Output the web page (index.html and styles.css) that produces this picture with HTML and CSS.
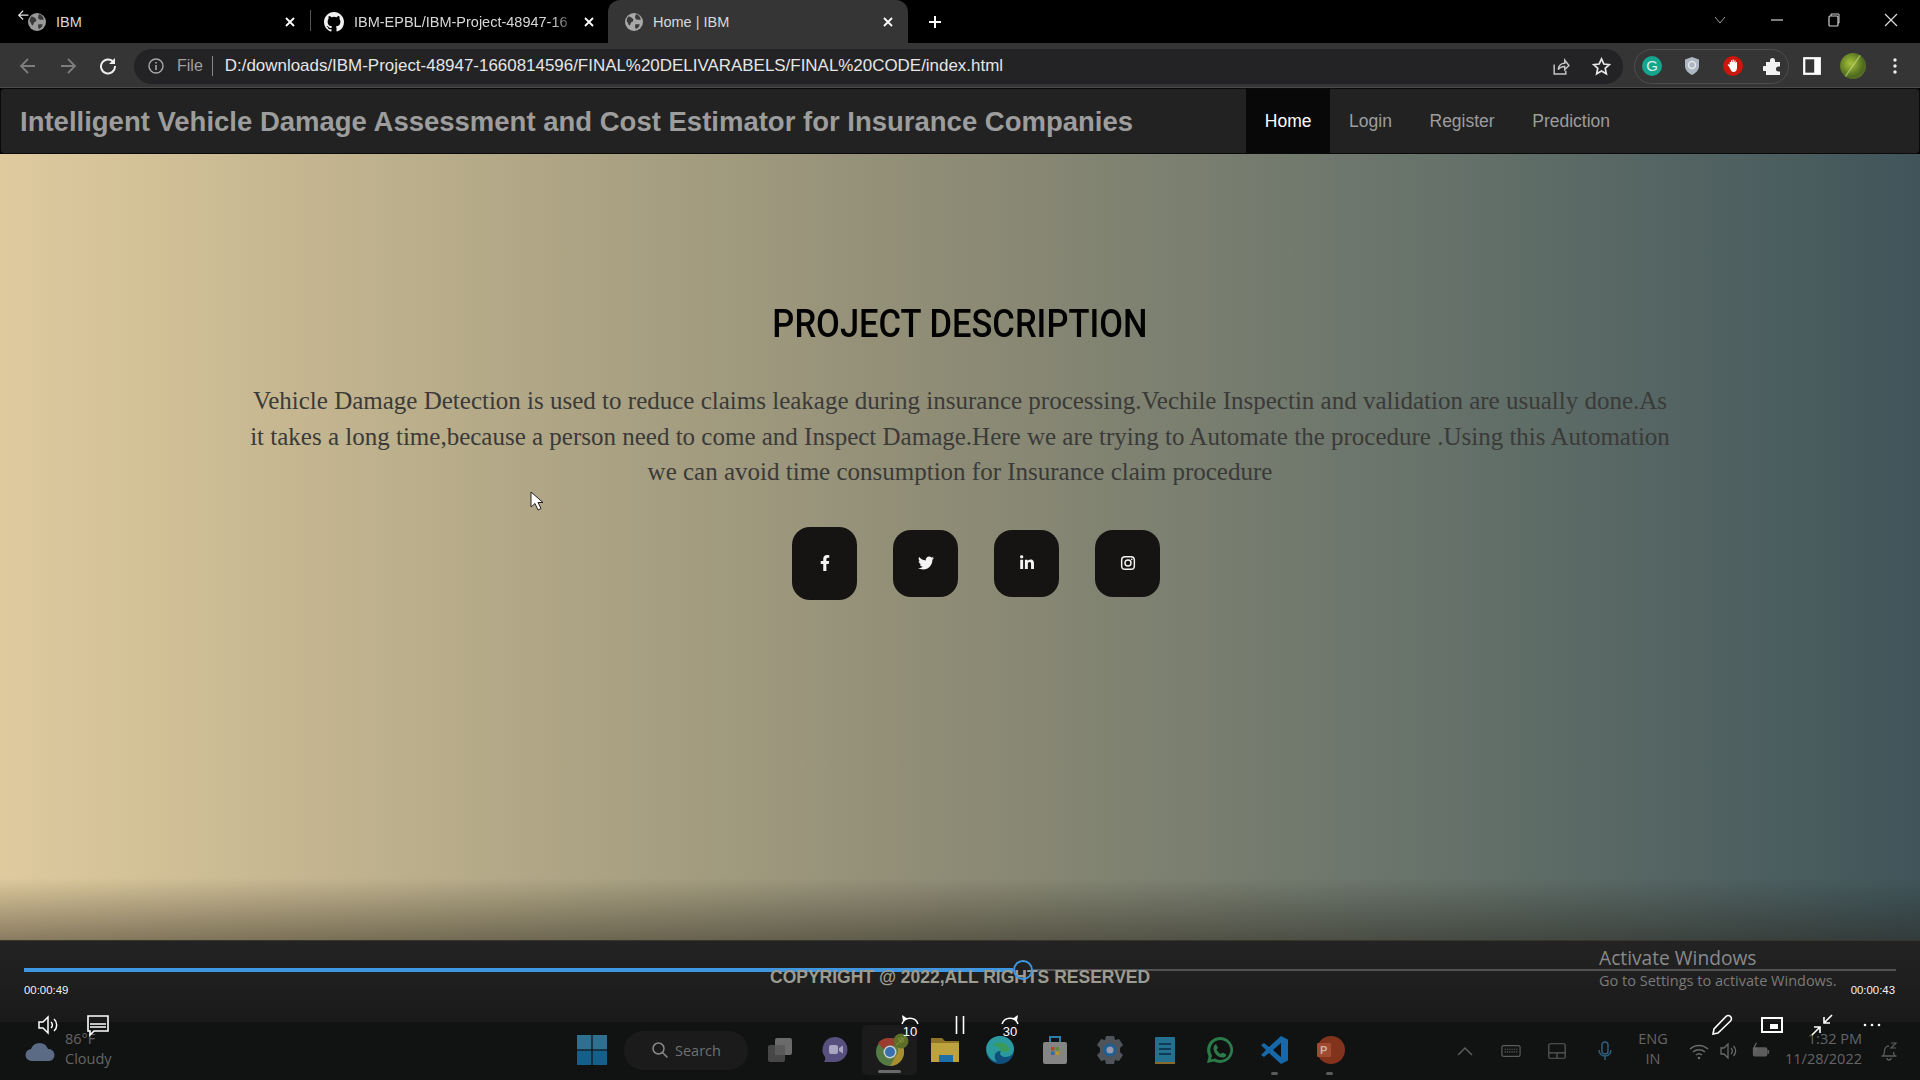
FILE: index.html
```html
<!DOCTYPE html>
<html lang="en">
<head>
<meta charset="utf-8">
<title>Home | IBM</title>
<link rel="stylesheet" href="styles.css">
</head>
<body>
<div class="screen">
  <div class="tabbar">
    <div class="tab tab-one">
      <svg class="back-mini" viewBox="0 0 16 16"><path d="M7 2 2 7l5 5M2 7h11" fill="none" stroke="#e8e8e8" stroke-width="1.3"/></svg>
      <svg class="fav" viewBox="0 0 16 16"><circle cx="8" cy="8" r="8" fill="#9a9a9a"/><path d="M3 3c2 0 3 1 4 2s0 3-1 3-1 3-2 3-1-2-2-3 0-4 1-5zM10 1c2 0 4 3 4 5h-3c-1 0-2-1-2-2s0-2 1-3zM10 10h3c0 2-2 4-3 4s-1-2-1-3 0-1 1-1z" fill="#3a3a3a"/></svg>
      <span class="tab-title">IBM</span>
      <svg class="tab-close" viewBox="0 0 12 12"><path d="M2 2l8 8M10 2l-8 8" stroke="#fff" stroke-width="1.8"/></svg>
    </div>
    <div class="tab tab-two">
      <svg class="fav fav-gh" viewBox="0 0 16 16"><path fill="#f2f2f2" d="M8 0C3.58 0 0 3.58 0 8c0 3.54 2.29 6.53 5.47 7.59.4.07.55-.17.55-.38 0-.19-.01-.82-.01-1.49-2.01.37-2.53-.49-2.69-.94-.09-.23-.48-.94-.82-1.13-.28-.15-.68-.52-.01-.53.63-.01 1.08.58 1.23.82.72 1.21 1.87.87 2.33.66.07-.52.28-.87.51-1.07-1.78-.2-3.64-.89-3.64-3.95 0-.87.31-1.59.82-2.15-.08-.2-.36-1.02.08-2.12 0 0 .67-.21 2.2.82a7.42 7.42 0 0 1 4 0c1.53-1.04 2.2-.82 2.2-.82.44 1.1.16 1.92.08 2.12.51.56.82 1.27.82 2.15 0 3.07-1.87 3.75-3.65 3.95.29.25.54.73.54 1.48 0 1.07-.01 1.93-.01 2.2 0 .21.15.46.55.38A8.01 8.01 0 0 0 16 8c0-4.42-3.58-8-8-8z"/></svg>
      <span class="tab-title tab-fade">IBM-EPBL/IBM-Project-48947-16</span>
      <svg class="tab-close" viewBox="0 0 12 12"><path d="M2 2l8 8M10 2l-8 8" stroke="#fff" stroke-width="1.8"/></svg>
    </div>
    <div class="tab tab-active">
      <svg class="fav" viewBox="0 0 16 16"><circle cx="8" cy="8" r="8" fill="#a8a8a8"/><path d="M3 3c2 0 3 1 4 2s0 3-1 3-1 3-2 3-1-2-2-3 0-4 1-5zM10 1c2 0 4 3 4 5h-3c-1 0-2-1-2-2s0-2 1-3zM10 10h3c0 2-2 4-3 4s-1-2-1-3 0-1 1-1z" fill="#3a3a3a"/></svg>
      <span class="tab-title">Home | IBM</span>
      <svg class="tab-close" viewBox="0 0 12 12"><path d="M2 2l8 8M10 2l-8 8" stroke="#fff" stroke-width="1.8"/></svg>
    </div>
    <svg class="new-tab" viewBox="0 0 14 14"><path d="M7 1v12M1 7h12" stroke="#fff" stroke-width="2"/></svg>
    <div class="window-controls">
      <svg viewBox="0 0 14 14"><path d="M2 4l5 6 5-6" fill="none" stroke="#9a9a9a" stroke-width="1"/></svg>
      <svg viewBox="0 0 14 14"><path d="M1 7h12" stroke="#cfcfcf" stroke-width="1.2"/></svg>
      <svg viewBox="0 0 14 14"><rect x="2" y="3" width="9" height="10" rx="1" fill="none" stroke="#cfcfcf" stroke-width="1.2"/><path d="M4 3V1h8v9h-1" fill="none" stroke="#cfcfcf" stroke-width="1"/></svg>
      <svg viewBox="0 0 14 14"><path d="M1 1l12 12M13 1L1 13" stroke="#dcdcdc" stroke-width="1.2"/></svg>
    </div>
  </div>

  <div class="toolbar">
    <svg class="tool-icon" viewBox="0 0 18 18"><path d="M9 2 2 9l7 7M2 9h14" fill="none" stroke="#7d7d7d" stroke-width="1.8"/></svg>
    <svg class="tool-icon" viewBox="0 0 18 18"><path d="M9 2l7 7-7 7M16 9H2" fill="none" stroke="#7d7d7d" stroke-width="1.8"/></svg>
    <svg class="tool-icon" viewBox="0 0 18 18"><path d="M14.6 5.2A7 7 0 1 0 16 9" fill="none" stroke="#eee" stroke-width="2"/><path d="M16 1v6h-6z" fill="#eee"/></svg>
    <div class="omnibox">
      <svg class="info" viewBox="0 0 16 16"><circle cx="8" cy="8" r="7" fill="none" stroke="#a8a8a8" stroke-width="1.4"/><path d="M8 7v5M8 4v1.6" stroke="#a8a8a8" stroke-width="1.6"/></svg>
      <span class="scheme">File</span>
      <span class="url">D:/downloads/IBM-Project-48947-1660814596/FINAL%20DELIVARABELS/FINAL%20CODE/index.html</span>
      <svg class="omni-icon share" viewBox="0 0 18 18"><path d="M3 7v9h11v-3" fill="none" stroke="#c4c4c4" stroke-width="1.4"/><path d="M7 12c0-4 3-6 6-6V3l4 5-4 4V9c-3 0-5 1-6 3z" fill="none" stroke="#c4c4c4" stroke-width="1.4"/></svg>
      <svg class="omni-icon" viewBox="0 0 18 18"><path d="M9 1.8l2.2 4.8 5.2.6-3.9 3.5 1.1 5.2L9 13.2l-4.6 2.7 1.1-5.2L1.6 7.2l5.2-.6z" fill="none" stroke="#e6e6e6" stroke-width="1.6"/></svg>
    </div>
    <div class="extensions">
      <span class="ext-g">G</span>
      <svg class="ext" viewBox="0 0 18 20"><path d="M9 1l7 2.500V10c0 4-3 7-7 9-4-2-7-5-7-9V3.500z" fill="#aeb6c2"/><circle cx="9" cy="9" r="3.500" fill="none" stroke="#e5e8ec" stroke-width="1.500"/></svg>
      <svg class="ext" viewBox="0 0 20 20"><circle cx="10" cy="10" r="10" fill="#c8170d"/><path d="M6 10.500l-1.500-1.500 1-1 1.200 1V6h1.300V4.300h1V6h.6V3.500h1.200V6h.6V4.500h1.200V7h.4V6h1v5.500c0 3-1.500 4.500-3.500 4.500-2.500 0-3-3-4.500-5.500z" fill="#fff"/></svg>
      <svg class="ext" viewBox="0 0 20 20"><path d="M3 6h4V4.500a2.500 2.500 0 0 1 5 0V6h5v4.500h-1.500a2.500 2.500 0 0 0 0 5H17V19H3v-4H1.500a2.500 2.500 0 0 1 0-5H3z" fill="#f2f2f2"/></svg>
    </div>
    <svg class="tool-icon panel" viewBox="0 0 18 18"><rect x="2" y="2" width="14" height="14" fill="none" stroke="#fff" stroke-width="2"/><rect x="11" y="2" width="5" height="14" fill="#fff"/></svg>
    <span class="avatar"></span>
    <svg class="tool-icon kebab" viewBox="0 0 18 18"><circle cx="9" cy="3" r="1.700" fill="#eee"/><circle cx="9" cy="9" r="1.700" fill="#eee"/><circle cx="9" cy="15" r="1.700" fill="#eee"/></svg>
  </div>

  <nav class="navbar">
    <a class="brand">Intelligent Vehicle Damage Assessment and Cost Estimator for Insurance Companies</a>
    <ul class="nav-links">
      <li class="nav-item current">Home</li>
      <li class="nav-item">Login</li>
      <li class="nav-item">Register</li>
      <li class="nav-item">Prediction</li>
    </ul>
  </nav>

  <main class="hero">
    <h1 class="hero-title">PROJECT DESCRIPTION</h1>
    <p class="hero-text">Vehicle Damage Detection is used to reduce claims leakage during insurance processing.Vechile Inspectin and validation are usually done.As it takes a long time,because a person need to come and Inspect Damage.Here we are trying to Automate the procedure .Using this Automation we can avoid time consumption for Insurance claim procedure</p>
    <div class="socials">
      <a class="social social-big"><svg viewBox="0 0 320 512"><path fill="#f4f4f4" d="M279 288l14-93h-89v-60c0-25 12-50 52-50h41V6s-37-6-72-6c-73 0-121 44-121 125v70H23v93h81v224h100V288z"/></svg></a>
      <a class="social"><svg viewBox="0 0 512 512"><path fill="#f4f4f4" d="M459 152c.3 4.500.3 9.100.3 13.600 0 138.700-105.600 298.600-298.600 298.600-59.500 0-114.700-17.200-161.100-47.100 8.400 1 16.600 1.300 25.300 1.300 49.100 0 94.200-16.600 130.300-44.800-46.100-1-84.800-31.200-98.100-72.800 6.500 1 13 1.600 19.800 1.600 9.400 0 18.800-1.300 27.600-3.600-48.100-9.700-84.100-52-84.100-103v-1.300c14 7.800 30.200 12.700 47.400 13.300-28.300-18.800-46.800-51-46.800-87.400 0-19.500 5.200-37.400 14.300-53 51.700 63.700 129.300 105.300 216.400 109.800-1.600-7.800-2.600-15.900-2.600-24 0-57.800 46.800-104.900 104.900-104.900 30.200 0 57.500 12.700 76.700 33.100 23.700-4.500 46.500-13.300 66.600-25.300-7.800 24-24.300 44.500-46.100 57.300 21.100-2.300 41.600-8.100 60.400-16.200-14.300 20.800-32.200 39.300-52.600 54.200z"/></svg></a>
      <a class="social"><svg viewBox="0 0 448 512"><path fill="#f4f4f4" d="M100 448H7V149h93zM53 108C23 108 0 83 0 54a54 54 0 0 1 107 0c0 29-24 54-54 54zm394 340h-93V302c0-35-1-79-48-79-48 0-56 38-56 77v148h-93V149h89v41h1c12-24 43-48 88-48 94 0 112 62 112 142v164z"/></svg></a>
      <a class="social"><svg viewBox="0 0 24 24"><rect x="2.500" y="2.500" width="19" height="19" rx="5" fill="none" stroke="#f4f4f4" stroke-width="2.200"/><circle cx="12" cy="12" r="4.500" fill="none" stroke="#f4f4f4" stroke-width="2.200"/><circle cx="17.500" cy="6.500" r="1.300" fill="#f4f4f4"/></svg></a>
    </div>
    <svg class="cursor" viewBox="0 0 14 21"><path d="M1 1v15l4-3.500L8 19l3-1.500-3-6h5z" fill="#fff" stroke="#222" stroke-width="1"/></svg>
  </main>

  <section class="player">
    <div class="progress"><span class="progress-done"></span><span class="progress-knob"></span><span class="progress-rest"></span></div>
    <div class="times"><span>00:00:49</span><span>00:00:43</span></div>
    <p class="copyright">COPYRIGHT @ 2022,ALL RIGHTS RESERVED</p>
    <div class="activate">
      <span class="activate-head">Activate Windows</span>
      <span class="activate-sub">Go to Settings to activate Windows.</span>
    </div>
  </section>

  <footer class="taskbar">
    <div class="weather">
      <svg class="cloud" viewBox="0 0 32 22"><path d="M8 21a6 6 0 0 1-1-12 9 9 0 0 1 17 0 6 6 0 0 1 1 12z" fill="#5b6b86"/></svg>
      <div class="weather-text"><span>86°F</span><span>Cloudy</span></div>
    </div>
    <div class="dock">
      <svg class="win" viewBox="0 0 30 30"><rect width="14.400" height="14.400" fill="#2f6f8f"/><rect x="15.600" width="14.400" height="14.400" fill="#2f6f8f"/><rect y="15.600" width="14.400" height="14.400" fill="#155f8b"/><rect x="15.600" y="15.600" width="14.400" height="14.400" fill="#155f8b"/></svg>
      <div class="search"><svg viewBox="0 0 18 18"><circle cx="7.500" cy="7.500" r="5.500" fill="none" stroke="#8a8a8a" stroke-width="1.500"/><path d="M11.500 11.500l5 5" stroke="#8a8a8a" stroke-width="1.500"/></svg><span>Search</span></div>
      <div class="dock-icons">
        <span class="dock-item"><svg viewBox="0 0 30 30"><rect x="10" y="3" width="17" height="17" rx="2" fill="#6a6a6a"/><rect x="3" y="10" width="17" height="17" rx="2" fill="#474747"/><rect x="10" y="10" width="10" height="10" fill="#5a5a5a"/></svg></span>
        <span class="dock-item"><svg viewBox="0 0 30 30"><path d="M15 2a12.500 12.500 0 0 1 0 25H4c1-2 1.500-3 1-5A12.500 12.500 0 0 1 15 2z" fill="#57507f"/><rect x="9" y="10" width="9" height="9" rx="2" fill="#a8a6c0"/><path d="M19 13l4-2.500v8L19 16z" fill="#a8a6c0"/></svg></span>
        <span class="dock-item dock-open"><svg viewBox="0 0 34 34"><circle cx="15" cy="19" r="14" fill="#527a42"/><path d="M15 5a14 14 0 0 1 12.500 7.500H15a6.500 6.500 0 0 0-6 4L3 10a14 14 0 0 1 12-5z" fill="#9c3b2f"/><path d="M27.500 12.500A14 14 0 0 1 15 33l6-10.500a6.500 6.500 0 0 0-.5-10z" fill="#a98e2f"/><circle cx="15" cy="19" r="6.500" fill="#ccc"/><circle cx="15" cy="19" r="5" fill="#3a6fb0"/><circle cx="26" cy="8" r="7.500" fill="#5d6e28"/><path d="M21 12L30 4M23 5l4 5M26 4l3 5" stroke="#8a9a3a" stroke-width="1"/></svg></span>
        <span class="dock-item"><svg viewBox="0 0 30 30"><path d="M1 3h11l3 3h14v21H1z" fill="#8f7428"/><rect x="1" y="8" width="28" height="19" fill="#bda23e"/><rect x="9" y="20" width="14" height="7" fill="#1d6fa8"/></svg></span>
        <span class="dock-item"><svg viewBox="0 0 30 30"><circle cx="15" cy="15" r="14" fill="#0f4f7c"/><path d="M1.500 11C4 3 11 1 15 1c8 0 14 6 14 13 0 5-4 8-8 8-4 0-6-2-6-4 0-1 1-2 1-2-5-1-9 5-4 11C5 26 0 18 1.500 11z" fill="#2a9a9f"/><path d="M16 16c-1-4-5-6-9-5 4-5 14-5 17 2 1 3-2 4-4 4s-3-1-4-1z" fill="#3a9a5a"/></svg></span>
        <span class="dock-item"><svg viewBox="0 0 30 30"><rect x="3" y="7" width="24" height="22" rx="2" fill="#858585"/><path d="M10 7V2h10v5" fill="none" stroke="#2a7ea8" stroke-width="2"/><rect x="11" y="12" width="3.500" height="3.500" fill="#b04a2a"/><rect x="15.500" y="12" width="3.500" height="3.500" fill="#5a8a3a"/><rect x="11" y="16.500" width="3.500" height="3.500" fill="#2a6fa8"/><rect x="15.500" y="16.500" width="3.500" height="3.500" fill="#b8962a"/></svg></span>
        <span class="dock-item"><svg viewBox="0 0 30 30"><path d="M11 1h8l1 4 4-1 4 6-3 3v4l3 3-4 6-4-1-1 4h-8l-1-4-4 1-4-6 3-3v-4L2 10l4-6 4 1z" fill="#4f545a"/><circle cx="15" cy="15" r="6.500" fill="#1c5f94"/><circle cx="15" cy="15" r="3.500" fill="#99a"/></svg></span>
        <span class="dock-item"><svg viewBox="0 0 30 30"><rect x="5" y="2" width="20" height="27" rx="1" fill="#23708f"/><rect x="5" y="27" width="20" height="2" fill="#8a6a2a"/><path d="M9 9h12M9 14h12M9 19h12" stroke="#0d3d55" stroke-width="1.800"/></svg></span>
        <span class="dock-item"><svg viewBox="0 0 30 30"><path d="M15 2a13 13 0 1 1-6 24.500L2 28l1.600-6.800A13 13 0 0 1 15 2z" fill="#2a7a4a"/><path d="M15 5a10 10 0 1 1-5 18.500l-4 1 1-4A10 10 0 0 1 15 5z" fill="#111"/><path d="M11 9l2 4-1.500 1.500c1 2 2.500 3.500 4.500 4.500l1.500-1.500 4 2c-.5 2.500-2.500 3-4 3-5 0-9-5-9-9 0-2 1-4 2.500-4.500z" fill="#2a7a4a"/></svg></span>
        <span class="dock-item"><svg viewBox="0 0 30 30"><path d="M21 1l7 3.500v21L21 29 9 18l-5 4-3-2 5-5-5-5 3-2 5 4z" fill="#1668a8"/><path d="M21 8l-8 7 8 7z" fill="#111"/></svg></span>
        <span class="dock-item"><svg viewBox="0 0 30 30"><circle cx="16" cy="15" r="14" fill="#82331c"/><rect x="2" y="8" width="14" height="14" rx="1" fill="#a04a30"/><text class="ppt-letter" x="5" y="19">P</text></svg></span>
      </div>
    </div>
    <div class="tray">
      <svg class="tray-icon" viewBox="0 0 20 20"><path d="M3 14l7-7 7 7" fill="none" stroke="#5c5c5c" stroke-width="1.500"/></svg>
      <svg class="tray-icon" viewBox="0 0 22 20"><rect x="1" y="4" width="20" height="12" rx="2" fill="none" stroke="#5c5c5c" stroke-width="1.300"/><path d="M4 8h14M4 11h14" stroke="#5c5c5c" stroke-width="1.200" stroke-dasharray="1.500 1"/></svg>
      <svg class="tray-icon" viewBox="0 0 22 20"><rect x="2" y="2" width="18" height="16" rx="1.500" fill="none" stroke="#5c5c5c" stroke-width="1.300"/><path d="M2 12h18M11 12v6" stroke="#5c5c5c" stroke-width="1.300"/></svg>
      <svg class="tray-icon" viewBox="0 0 20 20"><rect x="7" y="1" width="6" height="12" rx="3" fill="none" stroke="#2e5e7e" stroke-width="1.500"/><path d="M4 9a6 6 0 0 0 12 0M10 15v4" fill="none" stroke="#2e5e7e" stroke-width="1.500"/></svg>
      <div class="lang"><span>ENG</span><span>IN</span></div>
      <svg class="tray-icon" viewBox="0 0 20 20"><path d="M1 8a13 13 0 0 1 18 0M4 11a9 9 0 0 1 12 0M7 14a4.500 4.500 0 0 1 6 0" fill="none" stroke="#6a6a6a" stroke-width="1.500"/><circle cx="10" cy="17" r="1.300" fill="#6a6a6a"/></svg>
      <svg class="tray-icon" viewBox="0 0 20 20"><path d="M2 7h3l4-4v14l-4-4H2z" fill="none" stroke="#6a6a6a" stroke-width="1.300"/><path d="M12 7a4 4 0 0 1 0 6M14.500 5a7 7 0 0 1 0 10" fill="none" stroke="#6a6a6a" stroke-width="1.300"/></svg>
      <svg class="tray-icon" viewBox="0 0 22 20"><rect x="2" y="6" width="16" height="10" rx="2" fill="#5c5c5c"/><rect x="18" y="9" width="2" height="4" fill="#5c5c5c"/><path d="M6 1L3 7h3L4 12" fill="none" stroke="#6a6a6a" stroke-width="1.300"/></svg>
      <div class="clock"><span>1:32 PM</span><span>11/28/2022</span></div>
      <svg class="tray-icon bell" viewBox="0 0 20 20"><path d="M4 15c1-1 1.500-2 1.500-5 0-3 2-5 4.500-5M16 15c-1-1-1.500-2-1.500-4M2.500 15h15M8 17a2 2 0 0 0 4 0" fill="none" stroke="#5c5c5c" stroke-width="1.300"/><path d="M12 2h5l-5 5h5" fill="none" stroke="#5c5c5c" stroke-width="1.200"/></svg>
    </div>
  </footer>

  <div class="controls">
    <div class="ctrl-group">
      <svg viewBox="0 0 24 24"><path d="M3 9h4l5-5v16l-5-5H3z" fill="none" stroke="#fff" stroke-width="1.500"/><path d="M15 9a4 4 0 0 1 0 6M18 6a8 8 0 0 1 0 12" fill="none" stroke="#fff" stroke-width="1.500"/></svg>
      <svg viewBox="0 0 24 24"><path d="M2 3h20v15H8l-4 4v-4H2z" fill="none" stroke="#fff" stroke-width="1.600"/><path d="M4 11h16M4 14h16" stroke="#fff" stroke-width="1.300"/></svg>
    </div>
    <div class="ctrl-group ctrl-center">
      <span class="seek"><svg viewBox="0 0 24 14"><path d="M4 12A8.500 8.500 0 0 1 20 12" fill="none" stroke="#fff" stroke-width="1.500"/><path d="M4 3l1 6 5-2z" fill="#fff"/></svg><b>10</b></span>
      <svg class="pause" viewBox="0 0 24 24"><path d="M8.500 3v18M15.500 3v18" stroke="#fff" stroke-width="1.600"/></svg>
      <span class="seek"><svg viewBox="0 0 24 14"><path d="M4 12A8.500 8.500 0 0 1 20 12" fill="none" stroke="#fff" stroke-width="1.500"/><path d="M20 3l-1 6-5-2z" fill="#fff"/></svg><b>30</b></span>
    </div>
    <div class="ctrl-group">
      <svg viewBox="0 0 24 24"><path d="M3 21l1-5L16 3.500a2.500 2.500 0 0 1 4.500 4.500L8 20z" fill="none" stroke="#fff" stroke-width="1.600"/></svg>
      <svg viewBox="0 0 24 24"><rect x="2" y="5" width="20" height="14" fill="none" stroke="#fff" stroke-width="2"/><rect x="10" y="11" width="8" height="5" fill="#fff"/></svg>
      <svg viewBox="0 0 24 24"><path d="M22 2l-8 8M14 4v6h6M2 22l8-8M4 14h6v6" fill="none" stroke="#fff" stroke-width="1.600"/></svg>
      <svg viewBox="0 0 24 24"><circle cx="5" cy="12" r="1.300" fill="#fff"/><circle cx="12" cy="12" r="1.300" fill="#fff"/><circle cx="19" cy="12" r="1.300" fill="#fff"/></svg>
    </div>
  </div>
</div>
</body>
</html>
```
FILE: styles.css
```css
* { box-sizing: border-box; }
html, body { margin: 0; height: 100%; background: #000; }
body { font-family: "Liberation Sans", Arial, sans-serif; overflow: hidden; }
.screen { position: relative; width: 1920px; height: 1080px; display: flex; flex-direction: column; overflow: hidden; }

/* tab strip */
.tabbar { height: 43px; flex: none; background: #000; display: flex; align-items: stretch; color: #d8d8d8; font-size: 14.5px; }
.tab { position: relative; display: flex; align-items: center; flex: none; }
.tab-one { width: 310px; padding-left: 28px; }
.tab-two { width: 298px; padding-left: 14px; border-left: 0; }
.tab-two::before { content: ""; position: absolute; left: 0; top: 10px; bottom: 12px; width: 1px; background: #555; }
.tab-active { width: 300px; padding-left: 17px; background: #353535; border-radius: 12px 12px 0 0; color: #d9d9d9; }
.fav { width: 18px; height: 18px; flex: none; }
.fav-gh { width: 20px; height: 20px; }
.back-mini { position: absolute; left: 17px; top: 9px; width: 14px; height: 14px; }
.tab-title { margin-left: 10px; white-space: nowrap; flex: 1; min-width: 0; }
.tab-fade { -webkit-mask-image: linear-gradient(90deg, #000 90%, rgba(0,0,0,.15)); mask-image: linear-gradient(90deg, #000 90%, rgba(0,0,0,.15)); }
.tab-close { width: 12px; height: 12px; flex: none; margin: 0 14px 0 14px; }
.tab-two .tab-close { margin: 0 13px 0 9px; }
.new-tab { width: 14px; height: 14px; margin: 15px 0 0 20px; flex: none; }
.window-controls { margin-left: auto; display: flex; align-items: center; gap: 43px; padding: 0 22px 4px 0; }
.window-controls svg { width: 14px; height: 14px; }

/* toolbar */
.toolbar { height: 45px; flex: none; background: #353535; display: flex; align-items: center; padding: 2px 0 0 19px; border-bottom: 1px solid #4a4a4a; }
.tool-icon { width: 18px; height: 18px; flex: none; margin-right: 22px; }
.toolbar .tool-icon:nth-child(3) { margin-right: 17px; }
.omnibox { width: 1489px; height: 35px; background: #232325; border-radius: 18px; display: flex; align-items: center; padding: 0 12px 0 14px; flex: none; }
.info { width: 16px; height: 16px; flex: none; }
.scheme { margin-left: 13px; font-size: 16px; color: #a0a0a0; padding-right: 9px; border-right: 1px solid #888; line-height: 20px; }
.url { margin-left: 12px; font-size: 16.95px; color: #e6e6e6; white-space: nowrap; }
.omni-icon { width: 19px; height: 19px; flex: none; }
.share { margin-left: auto; margin-right: 22px; }
.extensions { width: 155px; height: 35px; margin-left: 11px; margin-right: 13px; border: 1px solid #4e4e4e; border-radius: 18px; display: flex; align-items: center; justify-content: space-between; padding: 0 5px 0 7px; flex: none; }
.ext { width: 20px; height: 20px; flex: none; }
.ext-g { width: 20px; height: 20px; border-radius: 50%; background: #15a58c; color: #d8f0ea; font-size: 15px; text-align: center; line-height: 20px; }
.toolbar .panel { margin-right: 18px; width: 20px; height: 20px; }
.avatar { width: 26px; height: 26px; border-radius: 50%; background: linear-gradient(125deg, transparent 46%, rgba(216, 229, 138, .6) 49%, transparent 53%), radial-gradient(circle at 40% 40%, #a7c43b, #4e6a1f 60%, #6a7a30); flex: none; margin-right: 20px; }
.kebab { margin: 0; }

/* navbar */
.navbar { height: 66px; flex: none; display: flex; align-items: stretch; background: #222; border: 1px solid #0a0a0a; border-radius: 4px; padding-left: 19px; }
.brand { width: 1226px; flex: none; font-size: 27.5px; font-weight: 700; color: #9d9d9d; line-height: 66px; white-space: nowrap; }
.nav-links { list-style: none; margin: 0; padding: 0; display: flex; }
.nav-item { padding: 0 18.8px; font-size: 17.5px; line-height: 64px; color: #9d9d9d; }
.current { background: #080808; color: #fff; }

/* hero */
.hero { position: relative; flex: 1; min-height: 0; display: flex; flex-direction: column; align-items: center; padding-top: 150px; background: linear-gradient(90deg, #dfca9e 0%, #b5aa88 25%, #8d8b75 50%, #66726a 75%, #40555a 100%); }
.hero::after { content: ""; position: absolute; left: 0; right: 0; bottom: 0; height: 62px; background: linear-gradient(180deg, transparent, rgba(32, 28, 20, .45)); }
.hero-title { margin: 0; font-family: Roboto, sans-serif; font-weight: 500; font-size: 39px; line-height: 40px; color: #020202; white-space: nowrap; transform: scaleX(.885); }
.hero-text { width: 1424px; margin: 39px 0 0; font-family: "Liberation Serif", serif; font-size: 25px; line-height: 35.500px; text-align: center; color: #3a3a38; }
.socials { display: flex; align-items: center; gap: 36px; margin-top: 37px; padding-left: 32px; }
.social { width: 65px; height: 67px; border-radius: 18px; background: #151412; display: flex; align-items: center; justify-content: center; }
.social-big { height: 73px; }
.social svg { width: 16px; height: 16px; }
.cursor { position: absolute; left: 530px; top: 337px; width: 14px; height: 21px; }

/* player */
.player { position: relative; height: 82px; flex: none; background: linear-gradient(180deg, #232323, #1a1a1a); border-top: 1px solid #3a352a; }
.progress { display: flex; align-items: center; height: 20px; margin: 19px 24px 0; position: relative; }
.progress-done { width: 989px; height: 4px; background: #3e97e0; flex: none; }
.progress-knob { width: 20px; height: 20px; border: 2px solid #3e97e0; border-radius: 50%; flex: none; position: relative; z-index: 2; }
.progress-rest { flex: 1; height: 2px; background: #525252; }
.times { display: flex; justify-content: space-between; margin: 4px 25px 0 24px; font-size: 11.4px; color: #f2f2f2; }
.copyright { position: absolute; left: 770px; top: 26px; margin: 0; font-size: 17.500px; font-weight: 700; color: #9c9c92; white-space: nowrap; z-index: 1; }
.activate { position: absolute; left: 1599px; top: 5px; display: flex; flex-direction: column; font-family: "Open Sans", sans-serif; color: #8a8a8a; white-space: nowrap; }
.activate-head { font-size: 19.2px; line-height: 24px; }
.activate-sub { font-size: 14.500px; line-height: 22px; color: #7a7a7a; }

/* taskbar */
.taskbar { height: 58px; flex: none; background: #111212; display: grid; grid-template-columns: 577px 1fr 465px; align-items: center; font-family: "Open Sans", sans-serif; color: #656565; }
.weather { display: flex; align-items: center; padding-left: 24px; gap: 9px; }
.cloud { width: 32px; height: 22px; }
.weather-text, .lang, .clock { display: flex; flex-direction: column; font-size: 14.5px; line-height: 20px; margin-top: -4px; }
.dock { display: flex; align-items: center; margin-top: -2px; }
.win { width: 30px; height: 30px; flex: none; }
.search { width: 124px; height: 39px; margin-left: 17px; border-radius: 20px; background: #1b1b1b; display: flex; align-items: center; justify-content: center; gap: 6px; font-size: 14.500px; color: #707070; }
.search svg { width: 18px; height: 18px; }
.dock-icons { display: flex; margin-left: 4px; }
.dock-item { width: 55px; height: 50px; display: flex; align-items: center; justify-content: center; position: relative; }
.dock-item svg { width: 30px; height: 30px; }
.dock-open svg { width: 34px; height: 34px; margin-left: 4px; }
.dock-open { background: #1b1b1b; border-radius: 5px; }
.dock-open::after { content: ""; position: absolute; left: 16px; bottom: 2px; width: 23px; height: 3px; background: #6a6a6a; border-radius: 2px; }
.dock-item:nth-child(10)::after, .dock-item:nth-child(11)::after { content: ""; position: absolute; left: 24px; bottom: 0; width: 7px; height: 3px; background: #5a5a5a; border-radius: 2px; }
.ppt-letter { font-family: "Liberation Sans", sans-serif; font-size: 11px; font-weight: 700; fill: #d0b0a0; }
.tray { display: flex; align-items: center; padding-left: 0; }
.tray-icon { width: 20px; height: 20px; flex: none; margin-right: 26px; }
.tray .tray-icon:nth-of-type(3) { margin-right: 27.500px; }
.tray .tray-icon:nth-of-type(4) { margin-right: 20.500px; }
.lang { align-items: center; margin-right: 18px; width: 36px; }
.tray .tray-icon:nth-of-type(5) { margin-right: 10px; }
.tray .tray-icon:nth-of-type(6) { margin-right: 11.500px; }
.tray .tray-icon:nth-of-type(7) { margin-right: 18.500px; }
.clock { align-items: flex-end; width: 73px; margin-right: 17px; }
.tray .bell { margin: 0; }

/* player controls lying over the taskbar */
.controls { position: absolute; left: 36px; right: 36px; top: 1012px; height: 26px; display: flex; justify-content: space-between; align-items: center; }
.ctrl-group { display: flex; gap: 26px; align-items: center; }
.ctrl-group svg { width: 24px; height: 24px; flex: none; }
.ctrl-center { position: absolute; left: 862px; width: 100px; gap: 26px; }
.seek { position: relative; display: flex; flex-direction: column; align-items: center; width: 24px; height: 26px; color: #fff; font-size: 13px; }
.seek svg { height: 14px; }
.seek b { font-weight: 400; line-height: 12px; }
```
